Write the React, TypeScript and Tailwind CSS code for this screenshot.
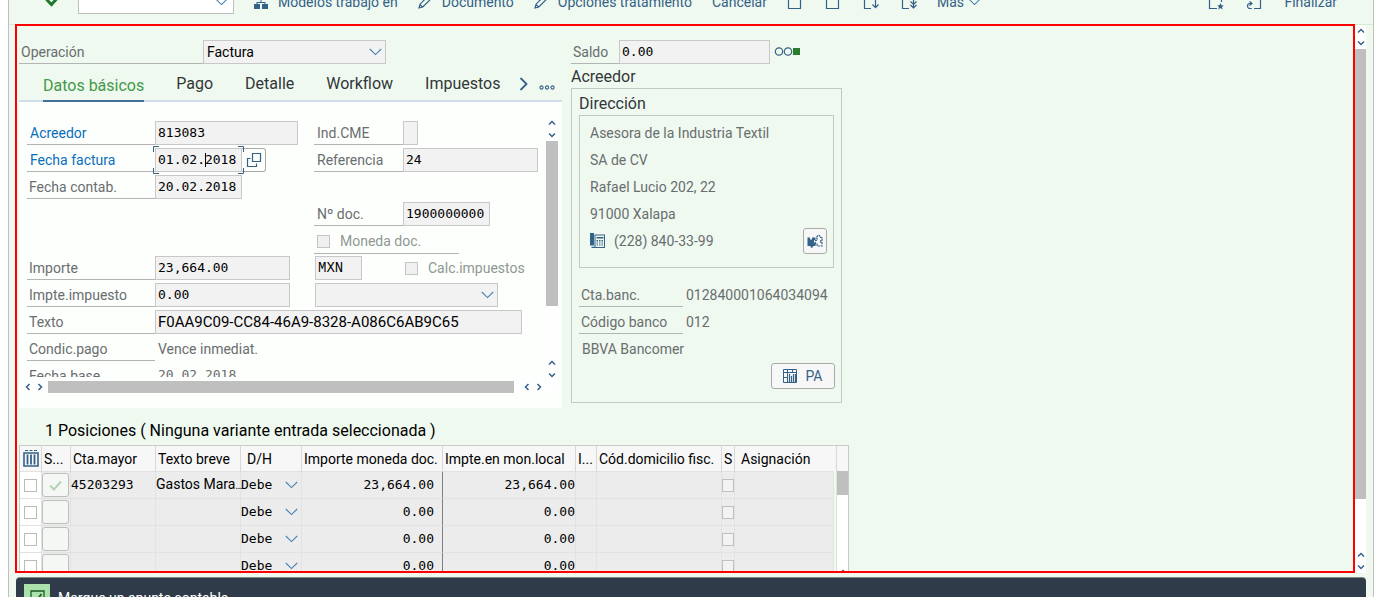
import React from "react";

const LABEL = "text-[14px] leading-[18px] text-[#6a6d70]";
const MONO = "font-['DejaVu_Sans_Mono',monospace] text-[13px] leading-[16px] text-black";
const FIELD = "h-6 border border-[#c8c8c8] bg-[#f2f2f2] pl-0.5 outline-none";

function Chevron({ className = "" }: { className?: string }) {
  return (
    <svg width="13" height="8" viewBox="0 0 13 8" fill="none" stroke="#4a82b0" strokeWidth="1.1" className={className} aria-hidden="true">
      <path d="M.8 1l5.7 5.6L12.200 1" />
    </svg>
  );
}

function Arrow({ dir }: { dir: "up" | "down" | "left" | "right" }) {
  const d = {
    up: "M1 5.500L4 2.500l3 3",
    down: "M1 2.500l3 3 3-3",
    left: "M5.500 1L2.500 4l3 3",
    right: "M2.500 1l3 3-3 3",
  }[dir];
  return (
    <svg width="8" height="8" viewBox="0 0 8 8" fill="none" stroke="#346187" strokeWidth="1.500" aria-hidden="true">
      <path d={d} />
    </svg>
  );
}

function ArrowsV() {
  return (
    <div className="flex h-6 shrink-0 flex-col items-center justify-center gap-1">
      <Arrow dir="up" />
      <Arrow dir="down" />
    </div>
  );
}

function ArrowsH() {
  return (
    <div className="flex h-3 w-[25px] shrink-0 items-center gap-1 pl-px">
      <Arrow dir="left" />
      <Arrow dir="right" />
    </div>
  );
}

function Pencil() {
  return (
    <svg width="14" height="14" viewBox="0 0 14 14" fill="none" stroke="#346187" strokeWidth="1.200" aria-hidden="true">
      <path d="M1 13l1-3.800L10 1.200 12.800 4 4.800 12zM2 9.500l2.500 2.500" />
    </svg>
  );
}

function PageIcon({ kind }: { kind: "plain" | "left" | "down" | "last" | "star" | "link" }) {
  return (
    <svg width="16" height="16" viewBox="0 0 16 16" fill="none" stroke="#346187" strokeWidth="1.200" aria-hidden="true">
      {(kind === "plain" || kind === "left") && <path d="M1.500 4v10.500h12V1.500h-8z" />}
      {kind === "left" && <path d="M5.500 1.500V5h-4" />}
      {(kind === "down" || kind === "last") && <path d="M8 14.500H1.500V1.500H9" />}
      {kind === "down" && <path d="M12.500 1v12.500M9.500 10.500l3 3.200 3-3.200" />}
      {kind === "last" && <path d="M12.500 1v12.500M9.500 7.500l3 3 3-3M9.500 11l3 3 3-3" />}
      {kind === "star" && (
        <>
          <path d="M9 14.500H1.500V1.500h12V8" />
          <path d="M12.500 9l1 2.300 2.300.2-1.800 1.500.6 2.400-2.100-1.300-2.100 1.300.6-2.400-1.800-1.500 2.300-.2z" fill="#346187" stroke="none" />
        </>
      )}
      {kind === "link" && <path d="M8 14.500h6.500V1.500h-11V6M5.800 14.500H4a2.500 2.500 0 010-5h2M3.500 7.500l2.500 2-2.500 2" />}
    </svg>
  );
}

function ToolButton({ icon, label, children }: { icon?: React.ReactNode; label?: string; children?: string }) {
  return (
    <button type="button" aria-label={label} className="flex shrink-0 items-center gap-2.5 text-[14px] leading-[18px] whitespace-nowrap text-[#346187]">
      {icon}
      {children}
    </button>
  );
}

function Toolbar() {
  return (
    <header className="flex h-6 shrink-0 items-end overflow-hidden">
      <div className="flex h-11 flex-1 items-center gap-5 px-9">
        <button type="button" aria-label="Aceptar" className="shrink-0">
          <svg width="13" height="12" viewBox="0 0 13 12" fill="none" stroke="#1f7a2d" strokeWidth="3" aria-hidden="true">
            <path d="M1.500 3.500l5 5 5-5.500" />
          </svg>
        </button>
        <div className="grid w-[156px] shrink-0 items-center">
          <select aria-label="Comando" className="col-start-1 row-start-1 h-6 appearance-none border border-[#bfbfbf] bg-white">
            <option></option>
          </select>
          <Chevron className="pointer-events-none col-start-1 row-start-1 mr-1.5 justify-self-end" />
        </div>
        <ToolButton
          icon={
            <svg width="14" height="14" viewBox="0 0 14 14" fill="#346187" aria-hidden="true">
              <path d="M4 0h6v5H4zM0 9h6v5H0zM8 9h6v5H8zM6.500 5h1v2h4v2h-1V8h-7v1h-1V7h4z" />
            </svg>
          }
        >
          Modelos trabajo en
        </ToolButton>
        <ToolButton icon={<Pencil />}>Documento</ToolButton>
        <ToolButton icon={<Pencil />}>Opciones tratamiento</ToolButton>
        <ToolButton>Cancelar</ToolButton>
        <div className="flex items-center gap-[22px]">
          <ToolButton label="Nuevo" icon={<PageIcon kind="plain" />} />
          <ToolButton label="Copiar" icon={<PageIcon kind="left" />} />
          <ToolButton label="Siguiente" icon={<PageIcon kind="down" />} />
          <ToolButton label="Último" icon={<PageIcon kind="last" />} />
        </div>
        <button type="button" className="flex items-center gap-1 text-[14px] leading-[18px] text-[#346187]">
          Más
          <Chevron />
        </button>
        <div className="ml-auto flex items-center gap-[22px]">
          <ToolButton label="Nuevo modo" icon={<PageIcon kind="star" />} />
          <ToolButton label="Acceso directo" icon={<PageIcon kind="link" />} />
          <ToolButton>Finalizar</ToolButton>
        </div>
      </div>
    </header>
  );
}

function Label({ htmlFor, children, link, className = "" }: { htmlFor: string; children: string; link?: boolean; className?: string }) {
  return (
    <label
      htmlFor={htmlFor}
      className={`flex h-6 items-center border-b border-[#b4b4b4] text-[14px] leading-[18px] whitespace-nowrap ${link ? "text-[#0a6ebd]" : "text-[#6a6d70]"} ${className}`}
    >
      {children}
    </label>
  );
}

function Field({ id, value, width, className = "" }: { id: string; value: string; width: string; className?: string }) {
  return <input id={id} readOnly defaultValue={value} className={`${FIELD} pb-0.5 ${MONO} ${width} ${className}`} />;
}

function DateFocusField() {
  return (
    <div className="flex items-start">
      <div className="relative flex">
        <Field id="fechaFactura" value="01.02.2018" width="w-[87px]" />
        <svg width="91" height="28" viewBox="0 0 91 28" fill="none" stroke="#346187" strokeWidth="1" className="pointer-events-none absolute -top-0.5 -left-0.5" aria-hidden="true">
          <path d="M.5 6V.5H6M85 .5h5.500V6M.5 22v5.500H6M85 27.500h5.500V22" />
          <path d="M52.500 7v14" stroke="#000" />
        </svg>
      </div>
      <button type="button" aria-label="Ayuda de búsqueda" className="flex h-6 w-6 items-center justify-center rounded-r-[3px] border border-l-0 border-[#a9a9a9]">
        <svg width="16" height="16" viewBox="0 0 16 16" fill="none" stroke="#346187" strokeWidth="1.200" aria-hidden="true">
          <path d="M6.500 1.500h8v8h-8zM4.500 6.500h-3v8h9v-3" />
        </svg>
      </button>
    </div>
  );
}

function Check({ id, children }: { id: string; children: string }) {
  return (
    <div className="flex h-6 items-center gap-2.5">
      <input id={id} type="checkbox" disabled className="size-[13px] shrink-0 appearance-none border border-[#c4c4c4] bg-[#f0f0f0]" />
      <label htmlFor={id} className="text-[14px] leading-[18px] whitespace-nowrap text-[#8f9892]">
        {children}
      </label>
    </div>
  );
}

function BasicData() {
  return (
    <div className="grid h-[260px] auto-rows-[27px] grid-cols-[128px_159px_89px_135px] items-start overflow-hidden pt-1 pl-1">
      <Label htmlFor="acreedor" link className="pl-[3px]">Acreedor</Label>
      <Field id="acreedor" value="813083" width="w-[143px]" />
      <Label htmlFor="indCme" className="pl-[3px]">Ind.CME</Label>
      <Field id="indCme" value="" width="w-[15px]" />

      <Label htmlFor="fechaFactura" link className="pl-[3px]">Fecha factura</Label>
      <DateFocusField />
      <Label htmlFor="referencia" className="pl-[3px]">Referencia</Label>
      <Field id="referencia" value="24" width="w-[135px]" />

      <Label htmlFor="fechaContab" className="pl-0.5">Fecha contab.</Label>
      <Field id="fechaContab" value="20.02.2018" width="w-[87px]" />

      <Label htmlFor="numDoc" className="col-start-3 row-start-4 pl-[3px]">Nº doc.</Label>
      <Field id="numDoc" value="1900000000" width="w-[87px]" className="col-start-4 row-start-4" />

      <div className="col-span-2 col-start-3 row-start-5 w-[145px] border-b border-[#b4b4b4] pl-[3px]">
        <Check id="monedaDoc">Moneda doc.</Check>
      </div>

      <Label htmlFor="importe" className="col-start-1 row-start-6 pl-0.5">Importe</Label>
      <Field id="importe" value="23,664.00" width="w-[135px]" className="row-start-6" />
      <input aria-label="Moneda" readOnly defaultValue="MXN" className={`${FIELD} row-start-6 ml-px w-[47px] font-['Liberation_Mono',monospace] text-[14px] leading-[16px] text-black`} />
      <div className="row-start-6 pl-0.5">
        <Check id="calcImpuestos">Calc.impuestos</Check>
      </div>

      <Label htmlFor="impuesto" className="row-start-7 pl-0.5">Impte.impuesto</Label>
      <Field id="impuesto" value="0.00" width="w-[135px]" className="row-start-7" />
      <div className="col-span-2 row-start-7 ml-px grid w-[183px] items-center">
        <select aria-label="Indicador de impuesto" className="col-start-1 row-start-1 h-6 appearance-none border border-[#c8c8c8] bg-[#f2f2f2]">
          <option></option>
        </select>
        <Chevron className="pointer-events-none col-start-1 row-start-1 mr-1 justify-self-end" />
      </div>

      <Label htmlFor="texto" className="row-start-8 pl-0.5">Texto</Label>
      <input
        id="texto"
        readOnly
        defaultValue="F0AA9C09-CC84-46A9-8328-A086C6AB9C65"
        className={`${FIELD} col-span-3 row-start-8 w-[367px] text-[15px] leading-[18px] text-black`}
      />

      <Label htmlFor="condicPago" className="row-start-9 pl-0.5">Condic.pago</Label>
      <output id="condicPago" className={`${LABEL} col-span-3 row-start-9 pt-[3px] pl-[3px]`}>Vence inmediat.</output>

      <Label htmlFor="fechaBase" className="row-start-10 pl-0.5">Fecha base</Label>
      <output id="fechaBase" className="col-span-3 row-start-10 pt-[3px] pl-[3px] font-['DejaVu_Sans_Mono',monospace] text-[13px] leading-[16px] text-[#6a6d70]">20.02.2018</output>
    </div>
  );
}

function Invoice() {
  return (
    <section className="w-[543px] shrink-0">
      <div className="flex">
        <Label htmlFor="operacion" className="w-[184px] pl-0.5">Operación</Label>
        <div className="grid w-[183px] items-center">
          <select id="operacion" className="col-start-1 row-start-1 h-6 appearance-none border border-[#c8c8c8] bg-[#f2f2f2] pl-[3px] text-[14px] leading-[18px] text-black">
            <option>Factura</option>
          </select>
          <Chevron className="pointer-events-none col-start-1 row-start-1 mr-1 justify-self-end" />
        </div>
      </div>
      <nav className="flex h-[38px] items-stretch border-b-2 border-[#cfdded] pt-[3px] pl-6 text-[16px] leading-[20px] text-[#32363a]">
        <div className="flex flex-1 gap-8">
          <button type="button" className="-mb-0.5 border-b-2 border-[#41709b] pt-1 text-[#429a48]">Datos básicos</button>
          <button type="button">Pago</button>
          <button type="button">Detalle</button>
          <button type="button">Workflow</button>
          <button type="button">Impuestos</button>
        </div>
        <div className="flex items-center gap-2.5 pr-[7px]">
          <button type="button" aria-label="Siguiente ficha">
            <svg width="10" height="14" viewBox="0 0 10 14" fill="none" stroke="#346187" strokeWidth="1.800" aria-hidden="true">
              <path d="M1.500 1l6 6-6 6" />
            </svg>
          </button>
          <button type="button" aria-label="Todas las fichas" className="pt-2">
            <svg width="16" height="5" viewBox="0 0 16 5" fill="none" stroke="#346187" strokeWidth="1.100" aria-hidden="true">
              <circle cx="2.500" cy="2.500" r="1.600" />
              <circle cx="8" cy="2.500" r="1.600" />
              <circle cx="13.500" cy="2.500" r="1.600" />
            </svg>
          </button>
        </div>
      </nav>
      <div className="bg-[#fcfffc] py-[15px] pr-1 pl-1">
        <div className="flex h-[264px]">
          <div className="min-w-0 flex-1">
            <BasicData />
          </div>
          <div className="flex w-3 flex-col bg-white">
            <ArrowsV />
            <div className="h-[165px] bg-[#bfbfbf]" />
            <div className="flex-1" />
            <ArrowsV />
          </div>
        </div>
        <div className="flex h-3 bg-white">
          <ArrowsH />
          <div className="flex-1 bg-[#bfbfbf]" />
          <div className="w-[44px] pl-2">
            <ArrowsH />
          </div>
        </div>
      </div>
    </section>
  );
}

function Vendor() {
  return (
    <section className="w-[271px] shrink-0">
      <div className="flex items-center">
        <Label htmlFor="saldo" className="w-12 pl-0.5">Saldo</Label>
        <Field id="saldo" value="0.00" width="w-[151px]" />
        <svg width="28" height="10" viewBox="0 0 28 10" className="ml-1 shrink-0" fill="none" stroke="#346187" strokeWidth="1.200" aria-hidden="true">
          <circle cx="5" cy="4.500" r="3.700" />
          <circle cx="14" cy="4.500" r="3.700" />
          <path d="M19 1h7v7h-7z" fill="#2b7d2b" stroke="none" />
        </svg>
      </div>
      <h2 className="flex h-6 items-center pt-px text-[16px] leading-[20px] text-[#32363a]">Acreedor</h2>
      <div className="h-[315px] border border-[#c4c8c4] px-[7px]">
        <h3 className="flex h-[26px] items-center pt-[3px] text-[16px] leading-[20px] text-[#32363a]">Dirección</h3>
        <div className="h-[153px] border border-[#c4c8c4] pt-[3px] pr-1.5 pl-2.5">
          {["Asesora de la Industria Textil", "SA de CV", "Rafael Lucio 202, 22", "91000 Xalapa"].map((t) => (
            <p key={t} className={`flex h-[27px] items-center ${LABEL}`}>{t}</p>
          ))}
          <div className={`flex h-[27px] items-center ${LABEL}`}>
            <svg width="15" height="15" viewBox="0 0 15 15" fill="#346187" className="mr-[9px]" aria-hidden="true">
              <path d="M0 0h4v12.500H0z" />
              <path fillRule="evenodd" d="M4.500 1.500H15V15H1.500v-1.200h3zM5.500 2.500v11.500h8.500V2.500z" />
              <path d="M6.500 4h7v1.500h-7zM6.500 7H8v1.500H6.500zM9 7h1.500v1.500H9zM11.500 7H13v1.500h-1.500zM6.500 9.500H8v1H6.500zM9 9.500h1.500v1H9zM11.500 9.500H13v1h-1.500zM6.500 11.500H8v1H6.500zM9 11.500h1.500v1H9zM11.500 11.500H13v1h-1.500z" />
            </svg>
            <span>(228) 840-33-99</span>
            <button type="button" aria-label="Datos del acreedor" className="ml-auto flex h-[26px] w-6 items-center justify-center rounded-[3px] border border-[#a9a9a9] bg-[#f7f7f7]">
              <svg width="16" height="16" viewBox="0 0 16 16" aria-hidden="true">
                <path d="M.5 4.500H3v2h2v-2h3.500V7H7v2.500h1.500V13H6a1.300 1.300 0 11-2.500 0h-3z" fill="#346187" />
                <path d="M10 4.500a1.600 1.600 0 113 0h2V7.500h-1.200v2H15V13h-5v-2H8.500V7.500H10z" fill="none" stroke="#346187" strokeWidth="1.200" strokeDasharray="2.200 .8" />
              </svg>
            </button>
          </div>
        </div>
        <dl className={`grid auto-rows-[27px] grid-cols-[104px_1fr] pt-[14px] ${LABEL}`}>
          <dt className="flex h-[25px] items-center border-b border-[#b4b4b4] pt-0.5 pl-0.5">Cta.banc.</dt>
          <dd className="pt-[3px] pl-[3px] leading-[20px]">012840001064034094</dd>
          <dt className="flex h-[25px] items-center border-b border-[#b4b4b4] pt-0.5 pl-0.5">Código banco</dt>
          <dd className="pt-[3px] pl-[3px] leading-[20px]">012</dd>
          <dd className="col-span-2 pt-[3px] pl-[3px] leading-[20px]">BBVA Bancomer</dd>
        </dl>
        <div className="-mr-px flex justify-end">
          <button type="button" className="flex h-[26px] w-16 items-center justify-center gap-2 rounded-[3px] border border-[#a9a9a9] bg-[#f7f7f7] text-[14px] leading-[18px] text-[#346187]">
            <svg width="14" height="14" viewBox="0 0 14 14" fill="none" stroke="#346187" aria-hidden="true">
              <path d="M.5.500h13v13H.5zM.5 3.500h13M4.500.5v13M9.500.5v3M.5 8.500h4" />
              <path d="M6.500 5v8M8.500 7v6M10.500 5v8M12.500 5v8" strokeWidth="1.200" />
            </svg>
            PA
          </button>
        </div>
      </div>
    </section>
  );
}

const COLS = ["w-[22px]", "w-[29px]", "w-[85px]", "w-[85px]", "w-[61px]", "w-[141px]", "w-[133px]", "w-[21px]", "w-[125px]", "w-[13px]", "w-[99px]"];
const TH = "h-[27px] overflow-hidden border-t border-r border-b border-t-[#c8ccc8] border-r-[#d8d8d8] border-b-[#e2e2e2] bg-[#f7f7f7] p-0 text-left font-normal whitespace-nowrap";
const TD = "h-[27px] border-r border-b border-[#e2e2e2] bg-[#ececec] p-0";

const ROWS = [
  { acct: "45203293", text: "Gastos Mara", amount: "23,664.00", ok: true },
  { acct: "", text: "", amount: "0.00", ok: false },
  { acct: "", text: "", amount: "0.00", ok: false },
  { acct: "", text: "", amount: "0.00", ok: false },
];

function Items() {
  return (
    <section>
      <h2 className="flex h-[37px] items-center pt-2 pl-[26px] text-[16px] leading-[20px] text-black">
        1 Posiciones ( Ninguna variante entrada seleccionada )
      </h2>
      <div className="flex">
        <table className="w-[814px] table-fixed border-separate border-spacing-0 border-l border-[#c8ccc8] text-[14px] leading-[18px] text-black">
          <colgroup>
            {COLS.map((w, i) => (
              <col key={i} className={w} />
            ))}
          </colgroup>
          <thead>
            <tr>
              <th className={TH}>
                <button type="button" aria-label="Seleccionar todo" className="flex w-full justify-center">
                  <svg width="16" height="17" viewBox="0 0 16 17" fill="none" stroke="#346187" aria-hidden="true">
                    <path d="M2 .5h3M6.500.500h3M11 .5h3" />
                    <path d="M1 3h14v13H1z" strokeWidth="1.600" />
                    <path d="M4.500 4.500v10M8 4.500v10M11.500 4.500v10" strokeWidth="1.800" />
                  </svg>
                </button>
              </th>
              <th className={`${TH} pl-0.5`}>S...</th>
              <th className={`${TH} pl-0.5`}>Cta.mayor</th>
              <th className={`${TH} pl-0.5`}>Texto breve</th>
              <th className={`${TH} pl-1.5`}>D/H</th>
              <th className={`${TH} border-r-[#808080] pl-0.5`}>Importe moneda doc.</th>
              <th className={`${TH} pl-0.5`}>Impte.en mon.local</th>
              <th className={`${TH} pl-0.5`}>I...</th>
              <th className={`${TH} pl-0.5`}>Cód.domicilio fisc.</th>
              <th className={`${TH} pl-0.5`}>S</th>
              <th className={`${TH} border-r-[#f7f7f7] pl-1.5`}>Asignación</th>
            </tr>
          </thead>
          <tbody>
            {ROWS.map((r, i) => (
              <tr key={i}>
                <td className="h-[27px] border-r border-b border-[#e2e2e2] bg-white p-0">
                  <input type="checkbox" aria-label={`Seleccionar fila ${i + 1}`} className="mx-auto block size-[13px] appearance-none border border-[#b8bcb8] bg-white" />
                </td>
                <td className={TD}>
                  <button type="button" aria-label={`Status fila ${i + 1}`} className="flex h-6 w-[27px] items-center justify-center rounded-[3px] border border-[#b9c2b9] bg-[#f4f7f3]">
                    {r.ok && (
                      <svg width="13" height="11" viewBox="0 0 13 11" fill="none" stroke="#b3d3b3" strokeWidth="2" aria-hidden="true">
                        <path d="M1 5.500l4 4L12 1.500" />
                      </svg>
                    )}
                  </button>
                </td>
                <td className={`${TD} ${MONO}`}>{r.acct}</td>
                <td className={TD}>
                  {r.text && (
                    <div className="flex items-baseline whitespace-nowrap">
                      {r.text}
                      <span className="text-[10px]">…</span>
                    </div>
                  )}
                </td>
                <td className={TD}>
                  <div className="grid items-center">
                    <select aria-label={`Debe o haber fila ${i + 1}`} className={`col-start-1 row-start-1 appearance-none bg-transparent ${MONO}`}>
                      <option>Debe</option>
                      <option>Haber</option>
                    </select>
                    <Chevron className="pointer-events-none col-start-1 row-start-1 mr-[3px] justify-self-end" />
                  </div>
                </td>
                <td className={`h-[27px] border-r border-b border-r-[#808080] border-b-[#e2e2e2] bg-[#ececec] p-0 pr-2 text-right ${MONO}`}>{r.amount}</td>
                <td className={`${TD} ${MONO} text-right`}>{r.amount}</td>
                <td className={TD} />
                <td className={TD} />
                <td className={TD}>
                  <input type="checkbox" disabled aria-label={`Indicador fila ${i + 1}`} className="block h-[13px] w-3 appearance-none border border-[#c0c0c0] bg-[#f2f2f2]" />
                </td>
                <td className={TD} />
              </tr>
            ))}
          </tbody>
        </table>
        <div className="flex w-[15px] flex-col border-t border-r border-[#c8ccc8]">
          <div className="ml-0.5 h-[25px] border-l border-[#d8d8d8] bg-[#f7f7f7]" />
          <div className="ml-0.5 h-6 border-l border-[#d8e6d8] bg-[#bfbfbf]" />
          <div className="ml-0.5 h-[70px] border-l border-[#d8e6d8] bg-white" />
          <div className="ml-0.5 flex flex-col items-center border-l border-[#d8e6d8] bg-white pt-[3px]">
            <Arrow dir="up" />
          </div>
        </div>
      </div>
    </section>
  );
}

export default function App() {
  return (
    <div className="h-screen overflow-hidden bg-white px-2 font-[Roboto,'Noto_Sans',sans-serif]">
      <div className="flex h-full flex-col border-x border-[#bfbfbf] bg-[#eff9ef]">
        <Toolbar />
        <main className="flex min-h-0 flex-1 border-t border-[#d2ecd2] pr-[7px] pl-1.5">
          <div className="-mt-px min-w-0 flex-1 overflow-hidden border-2 border-[#ff0000] pt-[14px] pl-0.5">
            <div className="flex gap-[9px]">
              <Invoice />
              <Vendor />
            </div>
            <Items />
          </div>
          <div className="flex w-[11px] shrink-0 flex-col bg-white">
            <ArrowsV />
            <div className="flex-9 bg-[#bfbfbf]" />
            <div className="flex-1" />
            <ArrowsV />
          </div>
        </main>
        <footer className="mx-[7px] mt-1 h-5 shrink-0 overflow-hidden rounded-t-[4px] border-t border-[#7f8a84] bg-[#2f3b48]">
          <div className="flex items-center gap-2 pt-1.5 pl-2 text-[14px] leading-[18px] text-white">
            <div className="flex size-[26px] shrink-0 items-center justify-center bg-[#abe2ab]">
              <svg width="15" height="15" viewBox="0 0 15 15" fill="none" stroke="#1d5c28" strokeWidth="1.300" aria-hidden="true">
                <path d="M1 1h13v13H1z" />
                <path d="M4 8l2.500 2.500L11.500 4" strokeWidth="1.800" />
              </svg>
            </div>
            <p className="pt-px">Marque un apunte contable</p>
          </div>
        </footer>
      </div>
    </div>
  );
}
